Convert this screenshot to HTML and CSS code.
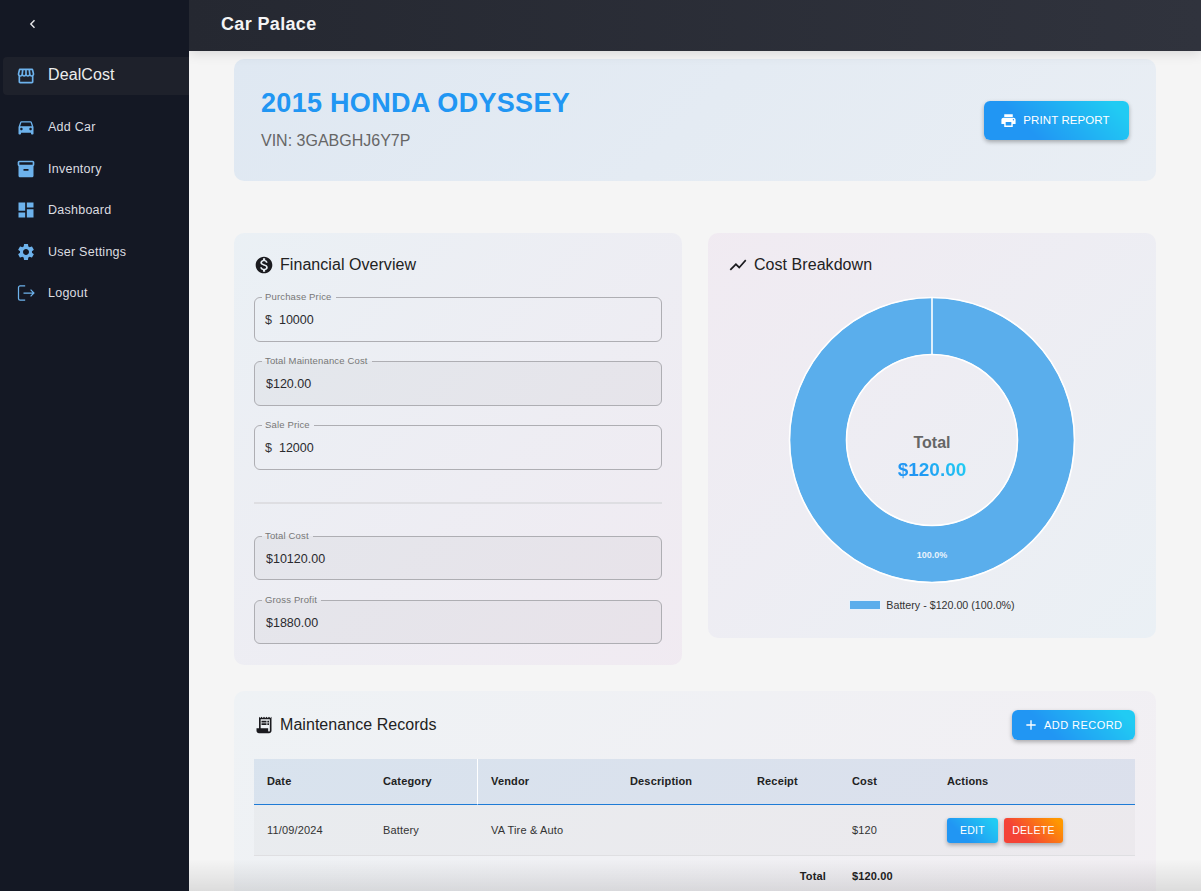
FILE: index.html
```html
<!DOCTYPE html>
<html lang="en">
<head>
<meta charset="utf-8">
<title>Car Palace</title>
<link rel="stylesheet" href="styles.css">
</head>
<body>
<div class="app">
  <aside class="sidebar">
    <div class="collapse">
      <svg class="chev" viewBox="0 0 12 12"><path d="M7.5 2.2 3.8 6l3.7 3.8"/></svg>
    </div>
    <div class="brand">
      <svg class="nav-icon" viewBox="0 0 24 24"><path d="M21.9 8.89l-1.05-4.37c-.22-.9-1-1.52-1.91-1.52H5.05c-.9 0-1.69.63-1.9 1.52L2.1 8.89c-.24 1.02-.02 2.06.62 2.88.08.11.19.19.28.29V19c0 1.1.9 2 2 2h14c1.1 0 2-.9 2-2v-6.94c.09-.09.2-.18.28-.28.64-.82.87-1.87.62-2.89zm-2.99-3.9 1.05 4.37c.1.42.01.84-.25 1.17-.14.18-.44.47-.94.47-.61 0-1.14-.49-1.21-1.14L16.98 5l1.93-.01zM13 5h1.96l.54 4.52c.05.39-.07.78-.33 1.07-.22.26-.54.41-.95.41-.67 0-1.22-.59-1.22-1.31V5zM8.49 9.52 9.04 5H11v4.69c0 .72-.55 1.31-1.29 1.31-.34 0-.65-.15-.89-.41-.25-.29-.37-.68-.33-1.07zm-4.45-.16L5.05 5h1.97l-.58 4.86c-.08.65-.6 1.14-1.21 1.14-.49 0-.8-.29-.93-.47-.27-.32-.36-.75-.26-1.17zM5 19v-6.03c.08.01.15.03.23.03.87 0 1.66-.36 2.24-.95.6.6 1.4.95 2.31.95.87 0 1.65-.36 2.23-.93.59.57 1.39.93 2.29.93.84 0 1.64-.35 2.24-.95.58.59 1.37.95 2.24.95.08 0 .15-.02.23-.03V19H5z"/></svg>
      <span>DealCost</span>
    </div>
    <nav class="nav">
      <a class="nav-item"><svg class="nav-icon" viewBox="0 0 24 24"><path d="M18.92 6.01C18.72 5.42 18.16 5 17.5 5h-11c-.66 0-1.21.42-1.42 1.01L3 12v8c0 .55.45 1 1 1h1c.55 0 1-.45 1-1v-1h12v1c0 .55.45 1 1 1h1c.55 0 1-.45 1-1v-8l-2.08-5.99zM6.5 16c-.83 0-1.5-.67-1.5-1.5S5.67 13 6.5 13s1.5.67 1.5 1.5S7.33 16 6.5 16zm11 0c-.83 0-1.5-.67-1.5-1.5s.67-1.5 1.5-1.5 1.5.67 1.5 1.5-.67 1.5-1.5 1.5zM5 11l1.5-4.5h11L19 11H5z"/></svg><span>Add Car</span></a>
      <a class="nav-item"><svg class="nav-icon" viewBox="0 0 24 24"><path d="M20 2H4c-1 0-2 .9-2 2v3.01c0 .72.43 1.34 1 1.69V20c0 1.1 1.1 2 2 2h14c.9 0 2-.9 2-2V8.7c.57-.35 1-.97 1-1.69V4c0-1.1-1-2-2-2zm-5 12H9v-2h6v2zm5-7H4V4l16-.02V7z"/></svg><span>Inventory</span></a>
      <a class="nav-item"><svg class="nav-icon" viewBox="0 0 24 24"><path d="M3 13h8V3H3v10zm0 8h8v-6H3v6zm10 0h8V11h-8v10zm0-18v6h8V3h-8z"/></svg><span>Dashboard</span></a>
      <a class="nav-item"><svg class="nav-icon" viewBox="0 0 24 24"><path d="M19.14 12.94c.04-.3.06-.61.06-.94 0-.32-.02-.64-.07-.94l2.03-1.58c.18-.14.23-.41.12-.61l-1.92-3.32c-.12-.22-.37-.29-.59-.22l-2.39.96c-.5-.38-1.03-.7-1.62-.94l-.36-2.54c-.04-.24-.24-.41-.48-.41h-3.84c-.24 0-.43.17-.47.41l-.36 2.54c-.59.24-1.13.57-1.62.94l-2.39-.96c-.22-.08-.47 0-.59.22L2.74 8.87c-.12.21-.08.47.12.61l2.03 1.58c-.05.3-.09.63-.09.94s.02.64.07.94l-2.03 1.58c-.18.14-.23.41-.12.61l1.92 3.32c.12.22.37.29.59.22l2.39-.96c.5.38 1.03.7 1.62.94l.36 2.54c.05.24.24.41.48.41h3.84c.24 0 .44-.17.47-.41l.36-2.54c.59-.24 1.13-.56 1.62-.94l2.39.96c.22.08.47 0 .59-.22l1.92-3.32c.12-.22.07-.47-.12-.61l-2.01-1.58zM12 15.6c-1.98 0-3.6-1.62-3.6-3.6s1.62-3.6 3.6-3.6 3.6 1.62 3.6 3.6-1.62 3.6-3.6 3.6z"/></svg><span>User Settings</span></a>
      <a class="nav-item"><svg class="nav-icon stroke" viewBox="0 0 24 24"><path d="M11 3.5H5a2 2 0 0 0-2 2v13a2 2 0 0 0 2 2h6M9 12h12.5M17.5 8l4 4-4 4"/></svg><span>Logout</span></a>
    </nav>
  </aside>

  <div class="main">
    <header class="topbar"><h1>Car Palace</h1></header>
    <main class="content">
      <section class="hero">
        <div class="hero-text">
          <h2 class="hero-title">2015 HONDA ODYSSEY</h2>
          <p class="hero-vin">VIN: 3GABGHJ6Y7P</p>
        </div>
        <button class="btn btn-blue btn-print">
          <svg class="btn-icon" viewBox="0 0 24 24"><path d="M19 8H5c-1.66 0-3 1.34-3 3v6h4v4h12v-4h4v-6c0-1.66-1.34-3-3-3zm-3 11H8v-5h8v5zm3-7c-.55 0-1-.45-1-1s.45-1 1-1 1 .45 1 1-.45 1-1 1zm-1-9H6v4h12V3z"/></svg>
          Print Report
        </button>
      </section>

      <div class="grid">
        <section class="card card-finance">
          <h3 class="card-title">
            <svg class="title-icon" viewBox="0 0 24 24"><path d="M12 2C6.48 2 2 6.48 2 12s4.48 10 10 10 10-4.48 10-10S17.52 2 12 2zm1.41 16.09V20h-2.67v-1.93c-1.71-.36-3.16-1.46-3.27-3.4h1.96c.1 1.05.82 1.87 2.65 1.87 1.96 0 2.4-.98 2.4-1.59 0-.83-.44-1.61-2.67-2.14-2.48-.6-4.18-1.62-4.18-3.67 0-1.72 1.39-2.84 3.11-3.21V4h2.67v1.95c1.86.45 2.79 1.86 2.85 3.39H14.3c-.05-1.11-.64-1.87-2.22-1.87-1.5 0-2.4.68-2.4 1.64 0 .84.65 1.39 2.67 1.91s4.18 1.39 4.18 3.91c-.01 1.83-1.38 2.83-3.12 3.16z"/></svg>
            Financial Overview
          </h3>
          <div class="fields">
            <fieldset class="field"><legend>Purchase Price</legend><span class="adorn">$</span><span>10000</span></fieldset>
            <fieldset class="field readonly"><legend>Total Maintenance Cost</legend><span>$120.00</span></fieldset>
            <fieldset class="field"><legend>Sale Price</legend><span class="adorn">$</span><span>12000</span></fieldset>
          </div>
          <hr class="divider">
          <div class="fields fields-totals">
            <fieldset class="field readonly short"><legend>Total Cost</legend><span>$10120.00</span></fieldset>
            <fieldset class="field readonly short"><legend>Gross Profit</legend><span>$1880.00</span></fieldset>
          </div>
        </section>

        <section class="card card-chart">
          <h3 class="card-title">
            <svg class="title-icon" viewBox="0 0 24 24"><path d="M3.5 18.49l6-6.01 4 4L22 6.92l-1.41-1.41-7.09 7.97-4-4L2 16.99z"/></svg>
            Cost Breakdown
          </h3>
          <div class="donut">
            <svg class="donut-svg" viewBox="0 0 288 288">
              <circle class="donut-ring" cx="144" cy="144" r="114"/>
              <circle class="donut-edge" cx="144" cy="144" r="142.5"/>
              <circle class="donut-edge" cx="144" cy="144" r="85.5"/>
              <path class="donut-edge" d="M144 2V58"/>
            </svg>
            <div class="donut-center">
              <span class="donut-label">Total</span>
              <span class="donut-value">$120.00</span>
            </div>
            <span class="donut-pct">100.0%</span>
          </div>
          <div class="legend"><i class="swatch"></i><span>Battery - $120.00 (100.0%)</span></div>
        </section>
      </div>

      <section class="card card-records">
        <div class="records-head">
          <h3 class="card-title flush">
            <svg class="title-icon" viewBox="0 0 24 24"><path d="M19.5 3.5 18 2l-1.5 1.5L15 2l-1.5 1.5L12 2l-1.5 1.5L9 2 7.5 3.5 6 2v14H3v3c0 1.66 1.34 3 3 3h12c1.66 0 3-1.34 3-3V2l-1.5 1.5zM19 19c0 .55-.45 1-1 1s-1-.45-1-1v-3H8V5h11v14z"/><path d="M9 7h6v2H9zm7 0h2v2h-2zm-7 3h6v2H9zm7 0h2v2h-2z"/></svg>
            Maintenance Records
          </h3>
          <button class="btn btn-blue btn-add">
            <svg class="btn-icon" viewBox="0 0 24 24"><path d="M19 13h-6v6h-2v-6H5v-2h6V5h2v6h6v2z"/></svg>
            Add Record
          </button>
        </div>
        <table class="table">
          <colgroup>
            <col class="c1"><col class="c2"><col class="c3"><col class="c4"><col class="c5"><col class="c6"><col class="c7">
          </colgroup>
          <thead>
            <tr><th>Date</th><th class="sep">Category</th><th>Vendor</th><th>Description</th><th>Receipt</th><th>Cost</th><th>Actions</th></tr>
          </thead>
          <tbody>
            <tr class="row">
              <td>11/09/2024</td><td>Battery</td><td>VA Tire &amp; Auto</td><td></td><td></td><td>$120</td>
              <td><div class="actions"><button class="btn btn-blue btn-small">Edit</button><button class="btn btn-red btn-small">Delete</button></div></td>
            </tr>
            <tr class="total">
              <td colspan="5" class="total-label">Total</td><td>$120.00</td><td></td>
            </tr>
          </tbody>
        </table>
      </section>
    </main>
    <div class="fade"></div>
  </div>
</div>
</body>
</html>
```
FILE: styles.css
```css
* { box-sizing: border-box; }
html, body { margin: 0; height: 100%; overflow: hidden; }
body { font-family: "Liberation Sans", Arial, sans-serif; color: #222; background: #f5f5f5; }

.app { display: flex; height: 100vh; }

/* sidebar */
.sidebar { width: 189px; flex: none; background: #141824; color: #dcdde0; }
.collapse { height: 57px; padding: 18px 0 0 27px; }
.chev { display: block; width: 12px; height: 12px; fill: none; stroke: #e8e8ea; stroke-width: 1.4; }
.brand { display: flex; align-items: center; gap: 12px; height: 38px; margin-left: 3px; padding: 0 0 2px 13px; background: #1e212b; border-radius: 4px 0 0 4px; font-size: 16px; letter-spacing: .1px; color: #eceded; }
.brand .nav-icon { margin-top: 2px; }
.nav { display: flex; flex-direction: column; padding-top: 11.3px; }
.nav-item { display: flex; align-items: center; gap: 12px; height: 41.5px; padding-left: 16px; font-size: 12.5px; letter-spacing: .25px; }
.nav-icon { width: 20px; height: 20px; flex: none; fill: #6db2ec; }
.nav-icon.stroke { fill: none; stroke: #6db2ec; stroke-width: 1.5; }

/* top bar */
.main { position: relative; flex: 1; min-width: 0; display: flex; flex-direction: column; overflow: hidden; }
.topbar { position: relative; z-index: 2; flex: none; height: 51px; padding: 0 32px; display: flex; align-items: center; background: linear-gradient(90deg, #252831, #30333d); box-shadow: 0 2px 12px rgba(0,0,0,.13); }
.topbar h1 { margin: 0 0 3px; font-size: 18px; font-weight: 700; letter-spacing: .35px; color: #f4f4f5; }

/* content */
.content { flex: 1; min-height: 0; overflow: hidden; padding: 8px 45px 0; }
.hero { display: flex; align-items: center; justify-content: space-between; height: 122px; padding: 0 27px; margin-bottom: 52px; border-radius: 10px; background: linear-gradient(135deg, #dfe8f2, #e9eef4); }
.hero-text { padding-bottom: 3px; }
.hero-title { margin: 0 0 12px; font-size: 27px; line-height: 32px; font-weight: 700; color: #2196f3; letter-spacing: .3px; }
.hero-vin { margin: 0; font-size: 16px; line-height: 20px; color: #666; }

.btn { display: inline-flex; align-items: center; justify-content: center; border: 0; font-family: inherit; text-transform: uppercase; color: #fff; cursor: pointer; box-shadow: 0 2px 4px rgba(0,0,0,.3); }
.btn-blue { background: linear-gradient(45deg, #2196f3 30%, #21cbf3 90%); }
.btn-red { background: linear-gradient(45deg, #f44336 30%, #ff9800 90%); }
.btn-icon { fill: #fff; flex: none; }
.btn-print { width: 145px; height: 39px; gap: 6px; padding: 0 3px 0 0; border-radius: 6px; font-size: 11.5px; letter-spacing: .1px; }
.btn-print .btn-icon { width: 17px; height: 17px; }
.btn-add { width: 123px; height: 30px; gap: 5.5px; padding: 0 2px 1px 0; border-radius: 6px; font-size: 11px; letter-spacing: .45px; }
.btn-add .btn-icon { width: 16px; height: 16px; }
.btn-small { height: 25px; padding: 0; border-radius: 3px; font-size: 10.5px; letter-spacing: .3px; }

.grid { display: grid; grid-template-columns: 448px 448px; column-gap: 26px; align-items: start; margin-bottom: 26px; }
.card { border-radius: 10px; padding: 20px; }
.card-finance { height: 432px; background: linear-gradient(135deg, rgba(33,150,243,.05), rgba(156,39,176,.05)); }
.card-chart { height: 405px; background: linear-gradient(135deg, rgba(156,39,176,.05), rgba(33,150,243,.05)); }
.card-records { height: 300px; background: linear-gradient(135deg, rgba(33,150,243,.03), rgba(156,39,176,.03)); }
.card-title { display: flex; align-items: center; gap: 6px; margin: 0; height: 24px; font-size: 16px; font-weight: 400; letter-spacing: .05px; color: #222; }
.title-icon { width: 20px; height: 20px; flex: none; fill: #1b1b1f; }

.fields { display: flex; flex-direction: column; gap: 14px; margin-top: 15px; }
.field { margin: 0; width: 408px; height: 50px; min-width: 0; padding: 10px 11px 0; display: flex; gap: 7px; border: 1px solid #aeaeb3; border-radius: 6px; font-size: 12.5px; line-height: 14px; color: #2a2a2e; }
.field legend { margin-left: -4px; padding: 0 4px 1px 3px; font-size: 9.5px; line-height: 10px; color: #777; letter-spacing: .15px; white-space: nowrap; }
.field.readonly { background: rgba(0,0,0,.03); }
.field.short { height: 49px; }
.adorn { margin-left: -1px; color: #333; }
.divider { height: 2px; margin: 32px 0 27px; border: 0; background: #dedee2; }
.fields-totals { margin-top: 0; gap: 15px; }

/* donut */
.donut { position: relative; width: 288px; height: 288px; margin: 19px auto 0; }
.donut-svg { display: block; width: 288px; height: 288px; }
.donut-ring { fill: none; stroke: #5aaeec; stroke-width: 56; }
.donut-edge { fill: none; stroke: #fff; stroke-width: 1.6; }
.donut-center { position: absolute; inset: 0; padding-top: 34px; display: flex; flex-direction: column; align-items: center; justify-content: center; gap: 5px; }
.donut-label { font-size: 16px; line-height: 20px; font-weight: 700; color: #666; }
.donut-value { font-size: 19px; line-height: 24px; font-weight: 700; background: linear-gradient(45deg, #2196f3 30%, #21cbf3 90%); -webkit-background-clip: text; background-clip: text; color: transparent; }
.donut-pct { position: absolute; left: 0; right: 0; top: 253px; text-align: center; font-size: 9px; line-height: 12px; font-weight: 700; color: #e8f3fc; }
.legend { display: flex; align-items: center; justify-content: center; gap: 5px; margin-top: 15px; font-size: 10.7px; line-height: 12px; color: #333; }
.swatch { display: block; width: 32px; height: 10px; background: #5aaeec; border: 1px solid #e6f1fb; }

/* records */
.records-head { display: flex; align-items: center; justify-content: space-between; margin: -1px 1px 19px 0; }
.flush { margin: 0; }
.table { width: 881px; border-collapse: separate; border-spacing: 0; table-layout: fixed; font-size: 11px; letter-spacing: .15px; color: #333; }
.c1 { width: 116px; } .c2 { width: 108px; } .c3 { width: 139px; } .c4 { width: 127px; } .c5 { width: 95px; } .c6 { width: 95px; } .c7 { width: 201px; }
th, td { padding: 0 13px; text-align: left; }
th { height: 46px; padding-bottom: 2px; font-weight: 700; color: #222; background: rgba(30,100,180,.1); border-bottom: 1px solid #1e7bd6; }
th.sep { border-right: 1px solid #fff; }
.row td { height: 51px; background: rgba(0,0,0,.025); border-bottom: 1px solid #dfdfe2; }
.total td { height: 42px; padding-bottom: 2px; font-weight: 700; color: #222; }
.total-label { text-align: right; }
.actions { display: flex; gap: 6px; }
.actions .btn-blue { width: 51px; }
.actions .btn-red { width: 59px; }

.fade { position: absolute; left: 0; right: 0; bottom: 0; height: 32px; z-index: 3; pointer-events: none; background: linear-gradient(180deg, rgba(0,0,0,0), rgba(0,0,0,.1)); }
```
